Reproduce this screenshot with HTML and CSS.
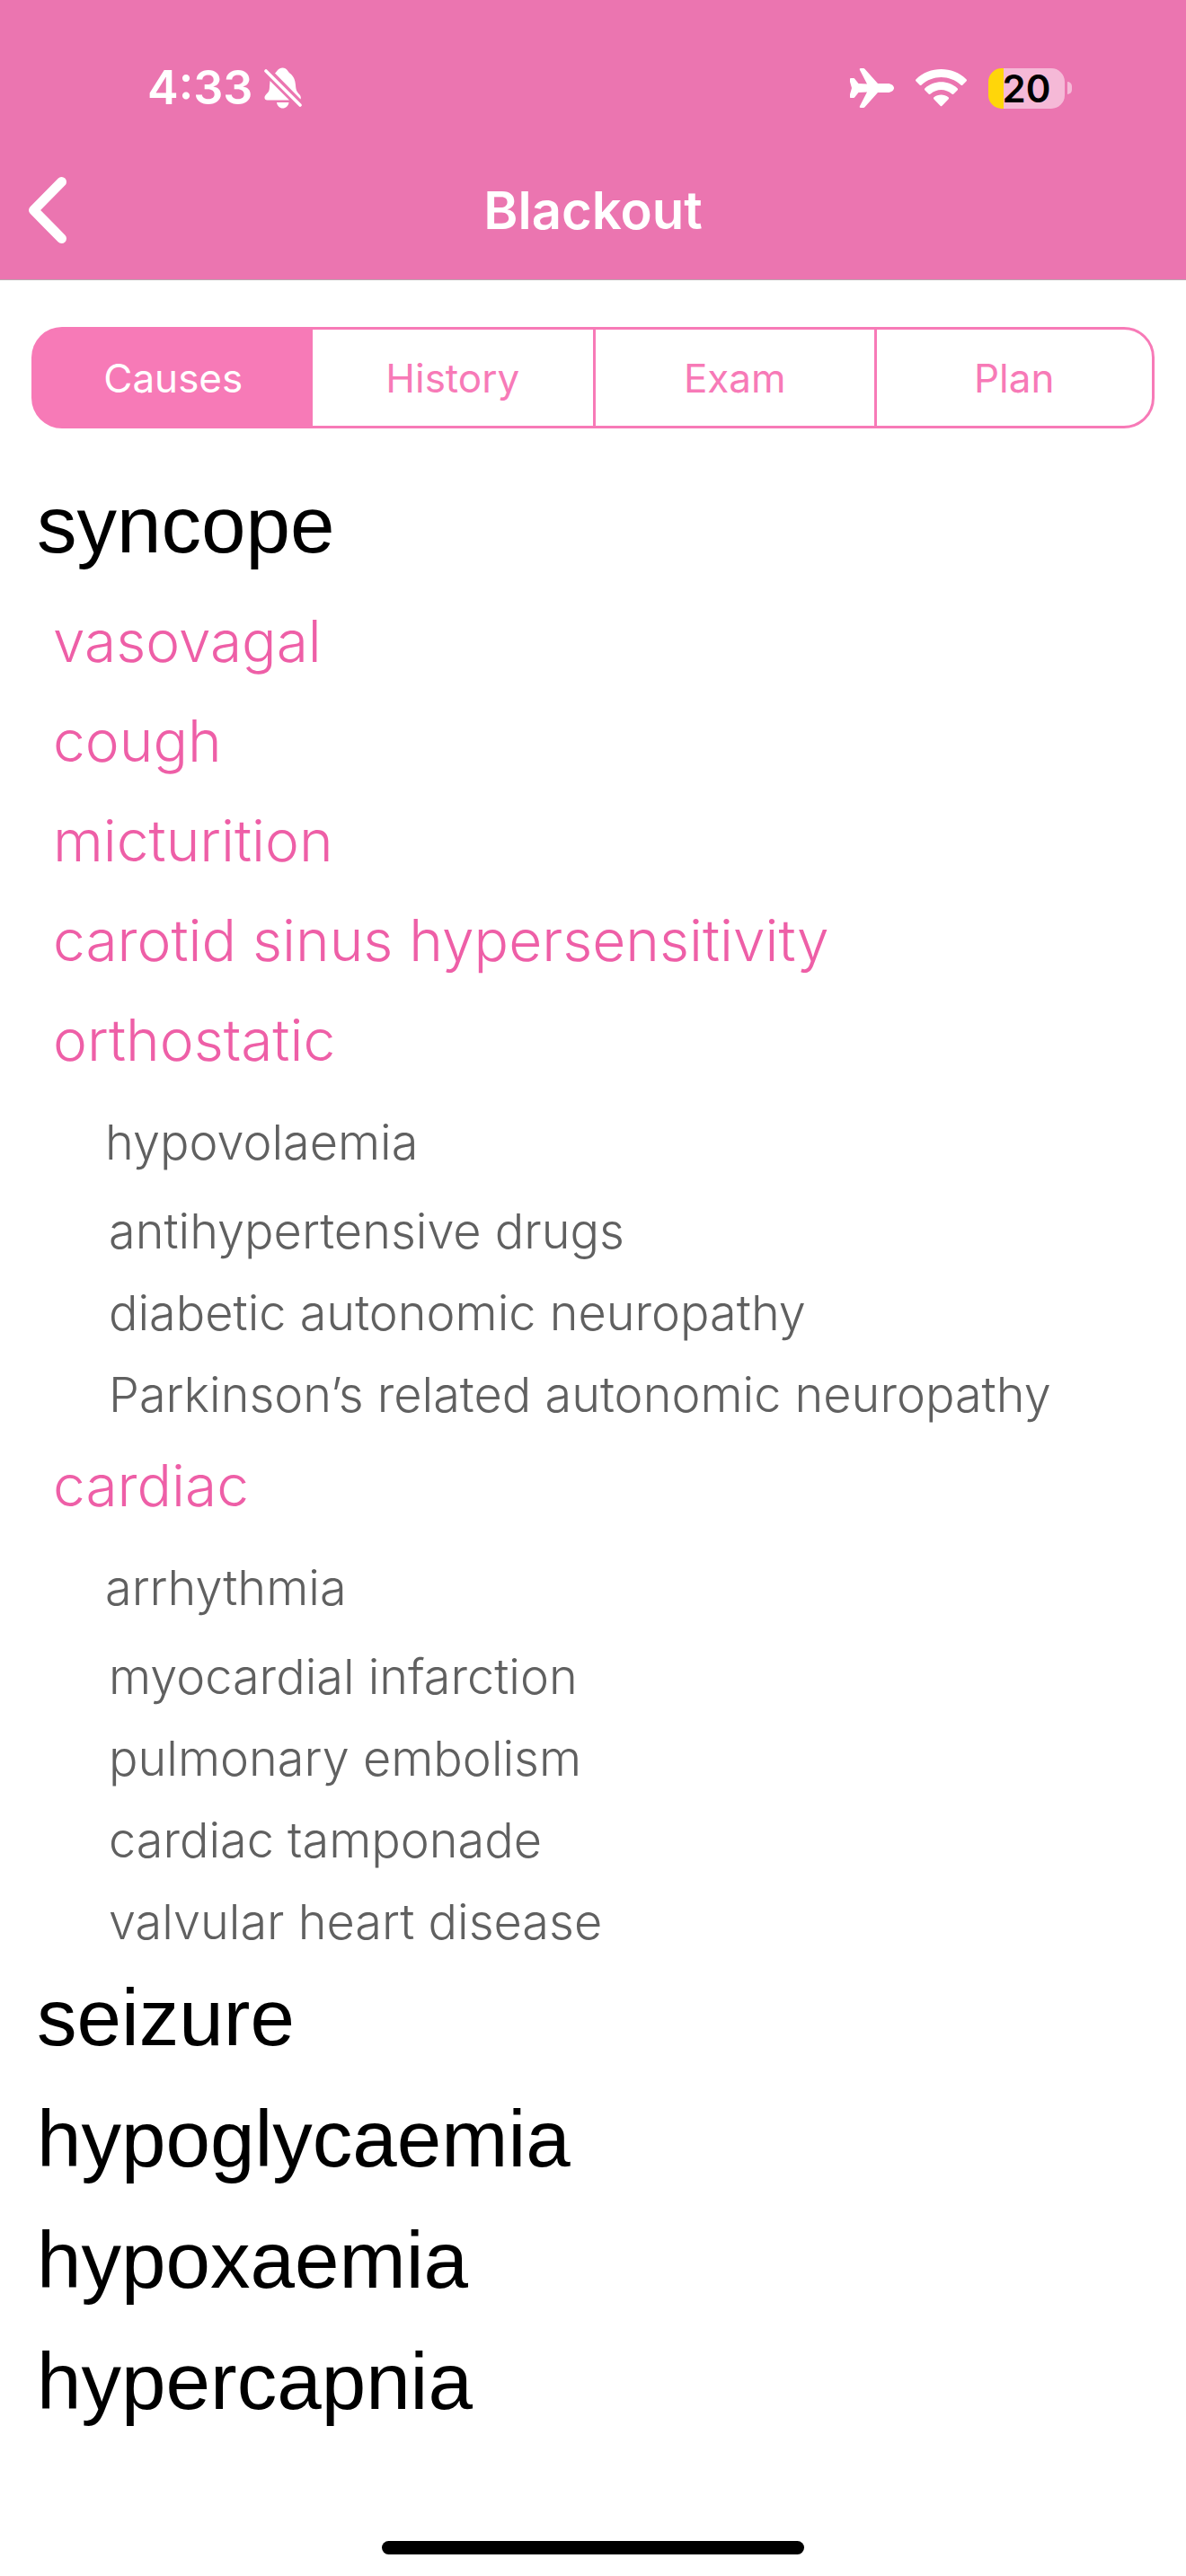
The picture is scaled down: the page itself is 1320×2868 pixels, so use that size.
FILE: index.html
```html
<!DOCTYPE html>
<html lang="en">
<head>
<meta charset="utf-8">
<meta name="viewport" content="width=device-width, initial-scale=1">
<title>Blackout</title>
<link rel="stylesheet" href="styles.css">
</head>
<body>
<div class="app">
  <header class="header">
    <div class="status">
      <div class="status-left">
        <span class="time">4:33</span>
        <svg class="bell" viewBox="0 0 42 46" width="42" height="46" aria-label="Silent mode">
          <path fill="#fff" d="M12 6.500C14.500 4.800 15.500 0.500 20.500 0.500S26.500 5 28.500 6.500C33 10 34.500 14 35 20C35.300 26 37 27.500 39.500 30.500C41 32.300 41 34 40.500 35.500zM6.500 15L28 36.500H3.500C0.500 36.500-0.500 33.500 1.500 31C4.500 27.500 6 27 6 21zM14 39H27.500C27 43 24 45.500 20.700 45.500S14.500 43 14 39z"/>
          <path stroke="#fff" stroke-width="3.600" stroke-linecap="round" d="M2 4L40 42"/>
        </svg>
      </div>
      <div class="status-right">
        <svg class="plane" viewBox="0 0 49 44" width="49" height="44" aria-label="Airplane mode">
          <path fill="#fff" d="M0 12C0 11 .5 11 1.500 11H3.500C4.500 11 5 11.300 5.500 12L9.500 17L19 17.500L11 2C10.400.7 10.800 0 12 0H14.500C15.500 0 16 .3 16.700 1L31 17H42C46 17 49 19.500 49 22S46 27 42 27H31L16.700 43C16 43.700 15.500 44 14.500 44H12C10.800 44 10.400 43.300 11 42L19 26.500L9.500 27L5.500 32C5 32.700 4.500 33 3.500 33H1.500C.5 33 0 33 0 32V29L2 22L0 15z"/>
        </svg>
        <svg class="wifi" viewBox="0 0 57 42" width="57" height="42" aria-label="Wi-Fi">
          <path fill="#fff" d="M.6 13.500C-.2 12.800-.2 12 .6 11.200C16-3.700 41-3.700 56.400 11.200C57.200 12 57.200 12.800 56.400 13.500L52.500 17.500C51.800 18.200 51 18.200 50.300 17.500C38 6 19 6 6.700 17.500C6 18.200 5.200 18.200 4.500 17.500zM10.500 23.500C9.800 22.800 9.800 22 10.500 21.300C20.500 12 36.500 12 46.500 21.300C47.200 22 47.200 22.800 46.500 23.500L42.500 27.400C41.800 28.100 41 28.100 40.300 27.500C33.500 21.500 23.500 21.500 16.700 27.500C16 28.100 15.200 28.100 14.500 27.400zM20.500 33.500C19.700 32.700 19.800 31.900 20.500 31.300C25 27.500 32 27.500 36.500 31.300C37.200 31.900 37.300 32.700 36.500 33.500L29.500 40.700C28.800 41.400 28.200 41.400 27.500 40.700z"/>
        </svg>
        <div class="battery">
          <span class="battery-level">20</span>
          <span class="battery-cap"></span>
        </div>
      </div>
    </div>
    <nav class="navbar">
      <button class="back" type="button" aria-label="Back">
        <svg viewBox="0 0 43 74" width="43" height="74"><path fill="none" stroke="#fff" stroke-width="11" stroke-linecap="round" stroke-linejoin="round" d="M37.500 5.500L6.500 37L37.500 68.500"/></svg>
      </button>
      <h1 class="title">Blackout</h1>
    </nav>
  </header>
  <main class="content">
    <div class="tabs" role="tablist">
      <button class="tab tab-active" type="button" role="tab" aria-selected="true">Causes</button>
      <button class="tab" type="button" role="tab" aria-selected="false">History</button>
      <button class="tab" type="button" role="tab" aria-selected="false">Exam</button>
      <button class="tab" type="button" role="tab" aria-selected="false">Plan</button>
    </div>
    <ul class="causes">
      <li><span class="cause">syncope</span>
        <ul class="types">
          <li>vasovagal</li>
          <li>cough</li>
          <li>micturition</li>
          <li>carotid sinus hypersensitivity</li>
          <li>orthostatic
            <ul class="details">
              <li>hypovolaemia</li>
              <li>antihypertensive drugs</li>
              <li>diabetic autonomic neuropathy</li>
              <li>Parkinson’s related autonomic neuropathy</li>
            </ul>
          </li>
          <li>cardiac
            <ul class="details">
              <li>arrhythmia</li>
              <li>myocardial infarction</li>
              <li>pulmonary embolism</li>
              <li>cardiac tamponade</li>
              <li>valvular heart disease</li>
            </ul>
          </li>
        </ul>
      </li>
      <li><span class="cause">seizure</span></li>
      <li><span class="cause">hypoglycaemia</span></li>
      <li><span class="cause">hypoxaemia</span></li>
      <li><span class="cause">hypercapnia</span></li>
    </ul>
  </main>
  <footer class="footer"><div class="home-bar"></div></footer>
</div>
</body>
</html>
```
FILE: styles.css
```css
* { box-sizing: border-box; }

body {
  margin: 0;
  background: #fff;
  color: #000;
  font-family: Inter, "Liberation Sans", sans-serif;
}

.app {
  display: flex;
  flex-direction: column;
  min-height: 100vh;
}

.header {
  background: #eb75b0;
  border-bottom: 1px solid #b9a9b1;
  color: #fff;
}

.status {
  display: flex;
  justify-content: space-between;
  align-items: center;
  padding: 66px 127px 0 164px;
  height: 130px;
}

.status-left,
.status-right {
  display: flex;
  align-items: center;
}

.status-left { gap: 13px; }
.status-right { gap: 24px; }

.time {
  font-size: 52px;
  line-height: 64px;
  font-weight: 600;
}

.battery {
  display: flex;
  align-items: center;
  gap: 3px;
}

.battery-level {
  width: 85px;
  height: 45px;
  border-radius: 15px;
  background: linear-gradient(to right, #ffd60a 20%, #f5b9d7 20%);
  color: #000;
  font-size: 42px;
  line-height: 45px;
  font-weight: 600;
  text-align: center;
}

.battery-cap {
  width: 5px;
  height: 14px;
  border-radius: 0 5px 5px 0;
  background: #f5b9d7;
}

.navbar {
  display: grid;
  grid-template-columns: 1fr auto 1fr;
  align-items: center;
  padding: 67px 31px 40px;
}

.back {
  justify-self: start;
  padding: 0;
  border: 0;
  background: none;
}

.back svg { display: block; }

.title {
  margin: 0;
  font-size: 58px;
  line-height: 74px;
  font-weight: 600;
}

.content {
  flex: 1;
  padding: 52px 35px 0;
}

.tabs {
  display: grid;
  grid-template-columns: repeat(4, 1fr);
  height: 113px;
}

.tab {
  padding: 0;
  border: 3px solid #f77ab7;
  border-right-width: 0;
  background: #fff;
  color: #f77ab7;
  font: inherit;
  font-size: 44px;
}

.tab:first-child { border-radius: 34px 0 0 34px; }

.tab:last-child {
  border-right-width: 3px;
  border-radius: 0 34px 34px 0;
}

.tab-active {
  background: #f77ab7;
  color: #fff;
}

.tab-active + .tab { border-left-width: 0; }

.causes,
.types,
.details {
  margin: 0;
  padding: 0;
  list-style: none;
}

.causes { padding-top: 46px; }

.cause {
  display: block;
  padding: 0 0 12px 6px;
  font-family: "Liberation Sans", Arial, sans-serif;
  font-size: 89px;
  line-height: 123px;
}

.types {
  padding-left: 24px;
  color: #ee5fa7;
  font-size: 64px;
  font-weight: 300;
  line-height: 111px;
}

.details {
  padding-left: 62px;
  color: #606060;
  font-size: 54px;
  line-height: 91px;
}

.details li:first-child {
  margin-left: -4px;
  padding: 13px 0 8px;
}

.footer {
  display: flex;
  justify-content: center;
  padding: 0 24px 24px;
}

.home-bar {
  width: 470px;
  height: 15px;
  border-radius: 8px;
  background: #000;
}
```
